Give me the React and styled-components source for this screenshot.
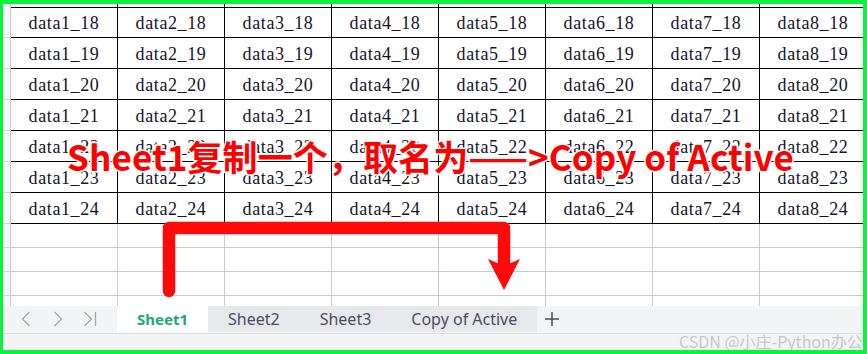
import React from 'react'
import styled, { createGlobalStyle } from 'styled-components'

const GlobalStyle = createGlobalStyle`
  html, body {
    margin: 0;
    padding: 0;
    background: #fff;
  }
  body {
    font-family: "Noto Sans", "Noto Sans CJK SC", sans-serif;
  }
`

const Frame = styled.div`
  position: relative;
  width: 867px;
  height: 354px;
  box-sizing: border-box;
  border: 4px solid #0af23e;
  border-left-width: 3px;
  overflow: hidden;
  display: flex;
  flex-direction: column;
  background: #fff;
`

const Sheet = styled.div`
  flex: 0 0 302px;
  overflow: hidden;
`

const Row = styled.div`
  display: grid;
  grid-template-columns: 8px repeat(8, 107px);
  height: ${p => p.$h}px;
`

const RowHead = styled.div`
  box-sizing: border-box;
  background: #f7f8fa;
  border-right: 1px solid #c3c8d6;
  border-bottom: ${p => (p.$open ? 'none' : '1px solid #d3d7e1')};
`

const Cell = styled.div`
  box-sizing: border-box;
  border-right: 1px solid ${p => p.$line};
  border-bottom: ${p => (p.$open ? 'none' : `1px solid ${p.$line}`)};
  display: flex;
  align-items: center;
  justify-content: center;
  padding-top: 3px;
  font-family: "Liberation Serif", serif;
  font-size: 18px;
  letter-spacing: 0.6px;
  color: #14142a;
  white-space: nowrap;
`

const TabBar = styled.div`
  display: flex;
  align-items: flex-start;
  height: 28px;
  box-sizing: border-box;
  background: #f3f4f6;
  border-bottom: 1px solid #dcdee3;
`

const Nav = styled.div`
  display: flex;
  width: 114px;
  height: 26px;
  padding-left: 7px;
  box-sizing: border-box;
`

const NavButton = styled.span`
  width: 32px;
  height: 26px;
  display: flex;
  align-items: center;
  justify-content: center;
  svg {
    stroke: #a3a7b0;
    stroke-width: 1.3;
    fill: none;
  }
`

const Tab = styled.div`
  height: 26px;
  line-height: 26px;
  padding: 0 20px;
  background: ${p => (p.$active ? '#fff' : '#e7e8ec')};
  color: ${p => (p.$active ? '#1aa874' : '#4a4e5c')};
  font-weight: ${p => (p.$active ? 700 : 400)};
  font-size: ${p => (p.$active ? 15 : 16)}px;
  white-space: nowrap;
`

const AddButton = styled.span`
  width: 30px;
  height: 26px;
  display: flex;
  align-items: center;
  justify-content: center;
  svg {
    stroke: #474c5b;
    stroke-width: 1.5;
  }
`

const StatusBar = styled.div`
  flex: 1;
  background: #f3f4f6;
`

const Callout = styled.div`
  position: absolute;
  left: 64px;
  top: 131px;
  font-family: "Noto Sans CJK SC", sans-serif;
  font-weight: 700;
  font-size: 35px;
  letter-spacing: 0.1px;
  line-height: 1.2;
  color: #ff0000;
  -webkit-text-stroke: 3px #fff;
  paint-order: stroke fill;
  white-space: nowrap;
`

const Arrow = styled.svg`
  position: absolute;
  left: -3px;
  top: -4px;
  pointer-events: none;
`

const Watermark = styled.div`
  position: absolute;
  left: 676px;
  top: 325px;
  font-family: "Noto Sans CJK SC", sans-serif;
  font-size: 16px;
  color: #c6c6c6;
  text-shadow: 0 0 1px #fff;
  white-space: nowrap;
`

const cols = [1, 2, 3, 4, 5, 6, 7, 8]
const dataRows = [18, 19, 20, 21, 22, 23, 24]

const GridRow = ({ h, line, open, children }) => (
  <Row $h={h}>
    <RowHead $open={open} />
    {cols.map(c => (
      <Cell key={c} $line={line} $open={open}>
        {children ? children(c) : null}
      </Cell>
    ))}
  </Row>
)

const App = () => {
  return (
    <>
      <GlobalStyle />
      <Frame>
        <Sheet>
          <GridRow h={3} line="#000" />
          {dataRows.map(r => (
            <GridRow key={r} h={31} line="#000">
              {c => `data${c}_${r}`}
            </GridRow>
          ))}
          <GridRow h={24} line="#c6cbd8" />
          <GridRow h={24} line="#c6cbd8" />
          <GridRow h={24} line="#c6cbd8" />
          <GridRow h={12} line="#c6cbd8" open />
        </Sheet>

        <TabBar>
          <Nav>
            <NavButton>
              <svg width="10" height="16" viewBox="0 0 10 16">
                <path d="M8.5 1 L1.5 8 L8.5 15" />
              </svg>
            </NavButton>
            <NavButton>
              <svg width="10" height="16" viewBox="0 0 10 16">
                <path d="M1.5 1 L8.5 8 L1.5 15" />
              </svg>
            </NavButton>
            <NavButton>
              <svg width="14" height="16" viewBox="0 0 14 16">
                <path d="M1.5 1 L8.5 8 L1.5 15 M12.5 1 V15" />
              </svg>
            </NavButton>
          </Nav>
          <Tab $active>Sheet1</Tab>
          <Tab>Sheet2</Tab>
          <Tab>Sheet3</Tab>
          <Tab>Copy of Active</Tab>
          <AddButton>
            <svg width="16" height="16" viewBox="0 0 16 16">
              <path d="M8 1 V15 M1 8 H15" />
            </svg>
          </AddButton>
        </TabBar>
        <StatusBar />

        <Callout>Sheet1复制一个，取名为——&gt;Copy of Active</Callout>

        <Arrow width="867" height="354" viewBox="0 0 867 354">
          <path
            d="M169 291 L169 228 L504 228 L504 266"
            fill="none"
            stroke="#ff0a0a"
            strokeWidth="12.5"
            strokeLinecap="round"
            strokeLinejoin="round"
          />
          <polygon points="488,259 504,266 520,259 504,290" fill="#ff0a0a" />
        </Arrow>

        <Watermark>CSDN @小庄-Python办公</Watermark>
      </Frame>
    </>
  )
}

export default App
